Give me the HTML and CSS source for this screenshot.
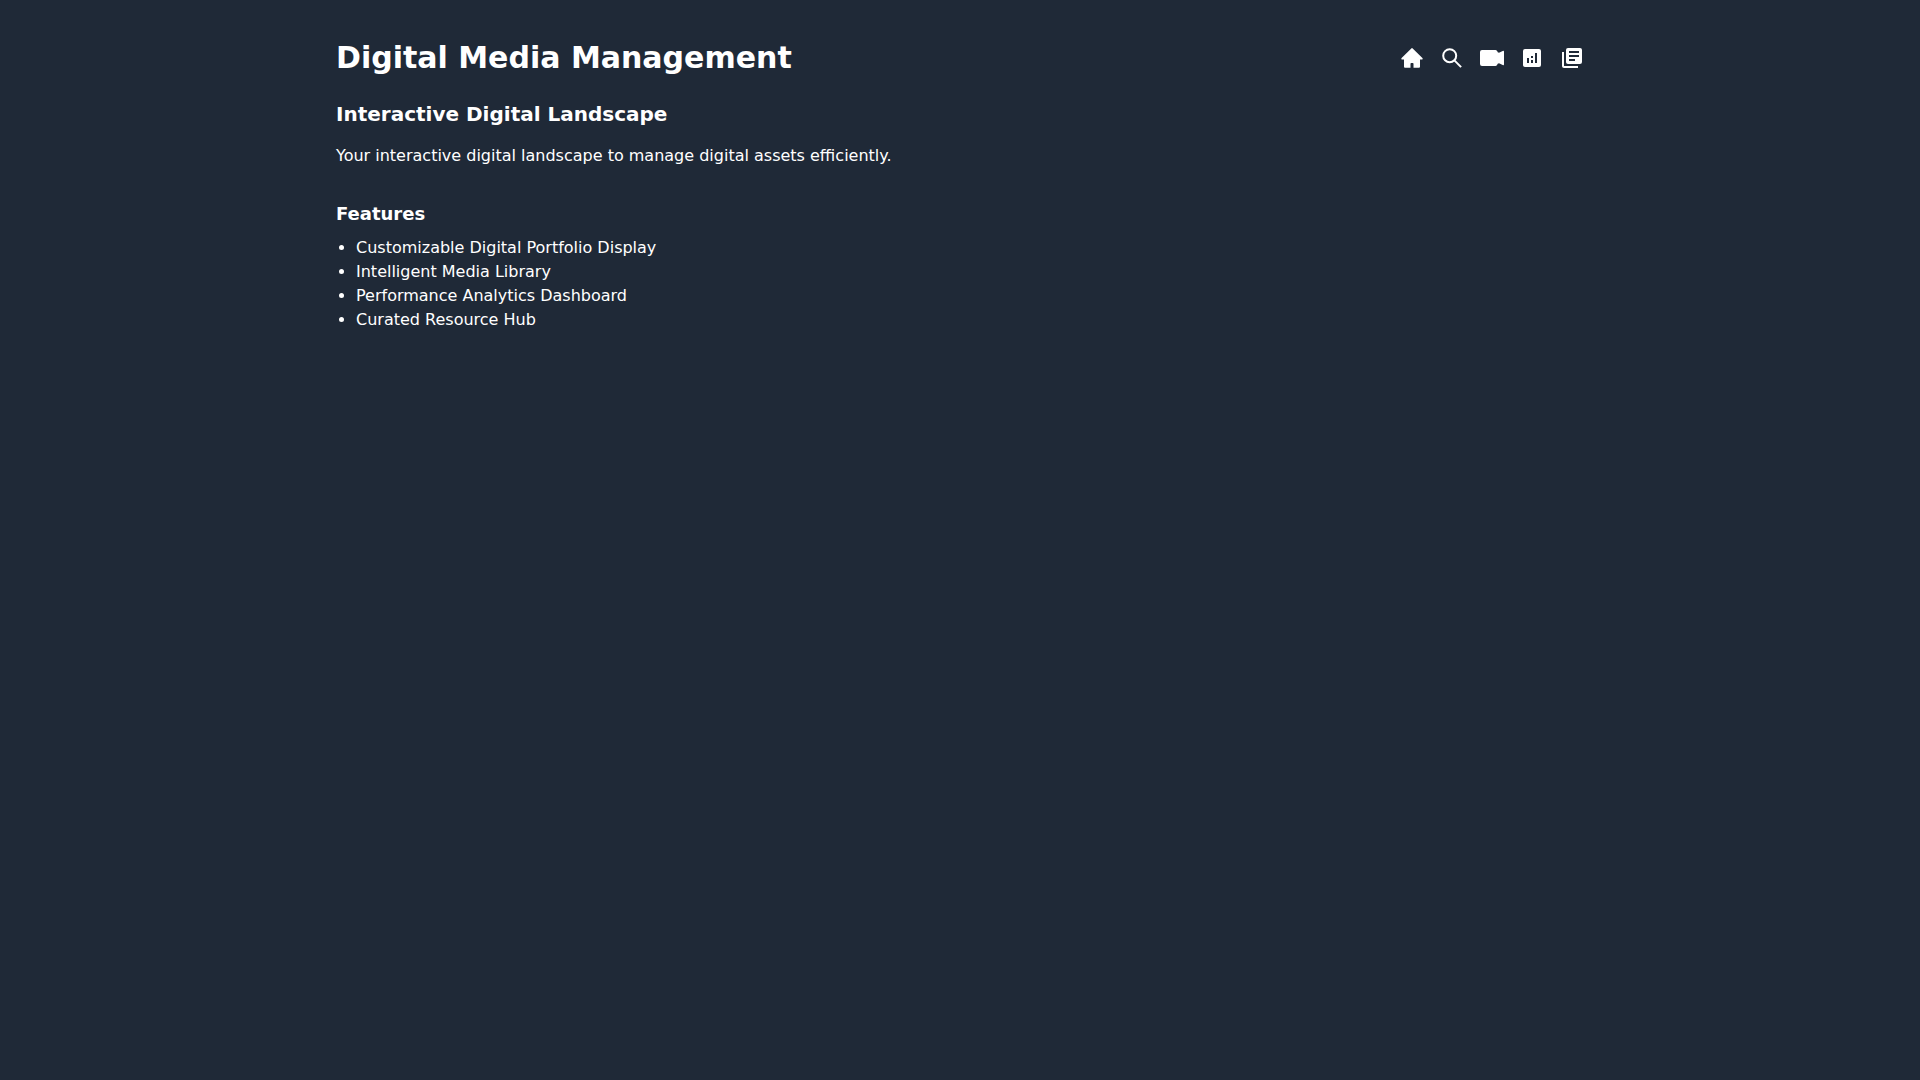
FILE: index.html
```html
<!DOCTYPE html>
<html lang="en">
<head>
<meta charset="utf-8">
<meta name="viewport" content="width=device-width, initial-scale=1">
<title>Digital Media Management</title>
<link rel="stylesheet" href="styles.css">
</head>
<body>
<div class="container">
  <header class="header">
    <h1 class="title">Digital Media Management</h1>
    <nav class="nav" aria-label="Main">
      <a class="nav-link" href="#home" aria-label="Home"><svg class="icon" viewBox="0 0 24 24"><path d="M11.3 2.400a1 1 0 0 1 1.400 0l9.700 9.700a.8.8 0 0 1-.5 1.400H20v7.300a1 1 0 0 1-1 1h-5.500v-4a.8.8 0 0 0-.8-.8h-1.400a.8.8 0 0 0-.8.8v4H5a1 1 0 0 1-1-1v-7.300H2.100a.8.8 0 0 1-.5-1.400z"/></svg></a>
      <a class="nav-link" href="#search" aria-label="Search"><svg class="icon icon-line" viewBox="0 0 24 24"><circle cx="9.700" cy="9.700" r="6.500"/><path d="m14.600 14.600 5.800 5.800"/></svg></a>
      <a class="nav-link" href="#media" aria-label="Media"><svg class="icon" viewBox="0 0 24 24"><path d="M2 4h13.500c1.200 0 1.800 1 2.200 2.200l1.300.6L22.700 5a.9.9 0 0 1 1.300.8v12.400a.9.9 0 0 1-1.300.8L19 17.200l-1.300.6c-.4 1.200-1 2.200-2.200 2.200H2a2 2 0 0 1-2-2V6a2 2 0 0 1 2-2z"/></svg></a>
      <a class="nav-link" href="#analytics" aria-label="Analytics"><svg class="icon" viewBox="0 0 24 24"><path d="M19 3H5a2 2 0 0 0-2 2v14c0 1.100.9 2 2 2h14a2 2 0 0 0 2-2V5a2 2 0 0 0-2-2zM9 17H7v-5h2zm4 0h-2v-3h2zm0-5h-2v-2h2zm4 5h-2V7h2z"/></svg></a>
      <a class="nav-link" href="#library" aria-label="Library"><svg class="icon" viewBox="0 0 24 24"><path d="M4 6H2v14c0 1.100.9 2 2 2h14v-2H4zM20 2H8a2 2 0 0 0-2 2v12c0 1.100.9 2 2 2h12a2 2 0 0 0 2-2V4a2 2 0 0 0-2-2zm-1 9H9V9h10zm-4 4H9v-2h6zm4-8H9V5h10z"/></svg></a>
    </nav>
  </header>
  <main>
    <h2 class="subtitle">Interactive Digital Landscape</h2>
    <p class="intro">Your interactive digital landscape to manage digital assets efficiently.</p>
    <section>
      <h3 class="section-title">Features</h3>
      <ul class="features">
        <li>Customizable Digital Portfolio Display</li>
        <li>Intelligent Media Library</li>
        <li>Performance Analytics Dashboard</li>
        <li>Curated Resource Hub</li>
      </ul>
    </section>
  </main>
</div>
</body>
</html>
```

FILE: styles.css
```css
* { box-sizing: border-box; margin: 0; padding: 0; }

body {
  min-height: 100vh;
  background: #1f2937;
  color: #fff;
  font: 16px/24px "DejaVu Sans", sans-serif;
}

.container { max-width: 1280px; margin: 0 auto; padding: 40px 16px; }
.header { display: flex; justify-content: space-between; align-items: center; margin-bottom: 24px; }
.title { font-size: 30px; line-height: 36px; }
.nav { display: flex; gap: 16px; }
.nav-link { display: block; color: inherit; }
.icon { display: block; width: 24px; height: 24px; fill: currentColor; }
.icon-line { fill: none; stroke: currentColor; stroke-width: 2; stroke-linecap: square; }
.subtitle { font-size: 20px; line-height: 28px; margin-bottom: 16px; }
.intro { margin-bottom: 32px; }
.section-title { font-size: 18px; line-height: 28px; margin-bottom: 8px; }
.features { padding-left: 20px; list-style: disc; }
```
